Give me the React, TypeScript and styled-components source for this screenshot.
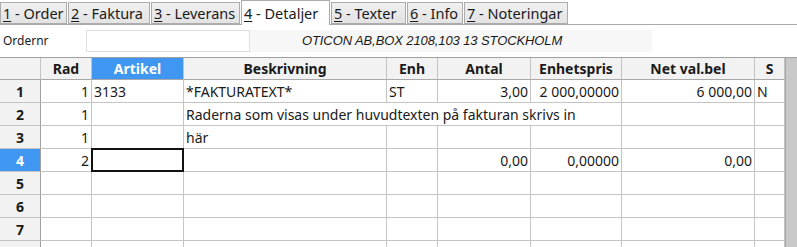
import styled, { createGlobalStyle } from "styled-components";

const GlobalStyle = createGlobalStyle`
  html, body {
    margin: 0;
    padding: 0;
    background: #ffffff;
  }
  body {
    font-family: "Noto Sans", "Open Sans", sans-serif;
    color: #1a1a1a;
  }
`;

const Page = styled.div`
  width: 797px;
  height: 247px;
  overflow: hidden;
  display: flex;
  flex-direction: column;
  background: #ffffff;
`;

const TabBar = styled.div`
  height: 25px;
  display: flex;
  align-items: flex-end;
  border-bottom: 1px solid #a9a9a9;
  box-sizing: border-box;
  background: #ffffff;
`;

const Tab = styled.div<{ $active?: boolean; $w: number }>`
  width: ${({ $w }) => $w}px;
  box-sizing: border-box;
  height: ${({ $active }) => ($active ? 25 : 22)}px;
  margin-bottom: ${({ $active }) => ($active ? -1 : 0)}px;
  margin-right: 1px;
  display: flex;
  align-items: center;
  padding-left: 2px;
  font-size: 14.5px;
  white-space: pre;
  color: #1a1a1a;
  background: ${({ $active }) => ($active ? "#ffffff" : "linear-gradient(#f0f0f0, #e3e3e3)")};
  border: 1px solid #acacac;
  border-bottom: ${({ $active }) => ($active ? "none" : "1px solid #acacac")};
  u {
    text-decoration: underline;
    text-underline-offset: 2px;
  }
`;

const InfoBar = styled.div`
  height: 32px;
  display: flex;
  align-items: center;
  box-sizing: border-box;
  padding: 2px 0 3px 3px;
  background: #ffffff;
`;

const FieldLabel = styled.span`
  width: 83px;
  font-size: 12px;
  color: #1a1a1a;
`;

const FieldInput = styled.div`
  width: 164px;
  height: 22px;
  box-sizing: border-box;
  border: 1px solid #dedede;
  background: #ffffff;
`;

const Address = styled.div`
  width: 402px;
  height: 22px;
  display: flex;
  align-items: center;
  padding-left: 52px;
  box-sizing: border-box;
  background: #f7f7f7;
  font-family: "Liberation Sans", Arial, sans-serif;
  font-style: italic;
  font-size: 13px;
  letter-spacing: -0.1px;
  color: #1a1a1a;
`;

const Sheet = styled.div`
  flex: 1;
  display: flex;
  border-top: 1px solid #a0a0a0;
  overflow: hidden;
`;

const Grid = styled.div`
  display: grid;
  grid-template-columns: 41px 51px 92px 203px 51px 93px 91px 133px 30px;
  grid-auto-rows: 23px;
  grid-template-rows: 22px;
  align-content: start;
`;

const ScrollTrack = styled.div`
  flex: 1;
  background: #c8c8c8;
  border-left: 1px solid #a6a6a6;
`;

const HeadCell = styled.div<{ $selected?: boolean }>`
  box-sizing: border-box;
  display: flex;
  align-items: center;
  justify-content: center;
  font-size: 14px;
  font-weight: 700;
  color: ${({ $selected }) => ($selected ? "#ffffff" : "#1a1a1a")};
  background: ${({ $selected }) => ($selected ? "#3f97f2" : "#f2f2f2")};
  border-right: 1px solid #c4c4c4;
  border-bottom: 1px solid #a8a8a8;
`;

const RowHead = styled(HeadCell)`
  border-right: 1px solid #a0a0a0;
  border-bottom: 1px solid #c4c4c4;
`;

const Cell = styled.div<{ $align?: "left" | "right"; $span?: number; $active?: boolean }>`
  box-sizing: border-box;
  display: flex;
  align-items: center;
  justify-content: ${({ $align }) => ($align === "right" ? "flex-end" : "flex-start")};
  grid-column: span ${({ $span }) => $span ?? 1};
  padding: 0 2px;
  font-size: 14px;
  white-space: nowrap;
  overflow: hidden;
  color: #1a1a1a;
  background: #ffffff;
  border-right: 1px solid #c4c4c4;
  border-bottom: 1px solid #c4c4c4;
  ${({ $active }) =>
    $active &&
    `
    outline: 2px solid #111111;
    outline-offset: -2px;
    margin: -1px 0 0 -1px;
  `}
`;

const tabs = [
  { key: "1", label: " - Order", w: 67 },
  { key: "2", label: " - Faktura", w: 82 },
  { key: "3", label: " - Leverans", w: 89 },
  { key: "4", label: " - Detaljer", w: 89, active: true },
  { key: "5", label: " - Texter", w: 75 },
  { key: "6", label: " - Info", w: 56 },
  { key: "7", label: " - Noteringar", w: 104 },
];

const columns = ["Rad", "Artikel", "Beskrivning", "Enh", "Antal", "Enhetspris", "Net val.bel", "S"];

type Row = {
  rad?: string;
  artikel?: string;
  besk?: string;
  span?: boolean;
  enh?: string;
  antal?: string;
  pris?: string;
  net?: string;
  s?: string;
};

const rows: Row[] = [
  { rad: "1", artikel: "3133", besk: "*FAKTURATEXT*", enh: "ST", antal: "3,00", pris: "2 000,00000", net: "6 000,00", s: "N" },
  { rad: "1", besk: "Raderna som visas under huvudtexten på fakturan skrivs in", span: true },
  { rad: "1", besk: "här" },
  { rad: "2", antal: "0,00", pris: "0,00000", net: "0,00" },
  {},
  {},
  {},
  {},
];

export default function App() {
  return (
    <Page>
      <GlobalStyle />
      <TabBar>
        {tabs.map((t) => (
          <Tab key={t.key} $w={t.w} $active={t.active}>
            <span>
              <u>{t.key}</u>
              {t.label}
            </span>
          </Tab>
        ))}
      </TabBar>
      <InfoBar>
        <FieldLabel>Ordernr</FieldLabel>
        <FieldInput />
        <Address>OTICON AB,BOX 2108,103 13 STOCKHOLM</Address>
      </InfoBar>
      <Sheet>
        <Grid>
          <HeadCell />
          {columns.map((c) => (
            <HeadCell key={c} $selected={c === "Artikel"}>
              {c}
            </HeadCell>
          ))}
          {rows.map((r, i) => {
            const current = i === 3;
            return [
              <RowHead key={`h${i}`} $selected={current}>
                {i < 7 ? i + 1 : ""}
              </RowHead>,
              <Cell key={`r${i}`} $align="right">{r.rad}</Cell>,
              <Cell key={`a${i}`} $active={current}>{r.artikel}</Cell>,
              r.span ? (
                <Cell key={`b${i}`} $span={4}>{r.besk}</Cell>
              ) : (
                [
                  <Cell key={`b${i}`}>{r.besk}</Cell>,
                  <Cell key={`e${i}`}>{r.enh}</Cell>,
                  <Cell key={`n${i}`} $align="right">{r.antal}</Cell>,
                  <Cell key={`p${i}`} $align="right">{r.pris}</Cell>,
                ]
              ),
              <Cell key={`v${i}`} $align="right">{r.net}</Cell>,
              <Cell key={`s${i}`}>{r.s}</Cell>,
            ];
          })}
        </Grid>
        <ScrollTrack />
      </Sheet>
    </Page>
  );
}
